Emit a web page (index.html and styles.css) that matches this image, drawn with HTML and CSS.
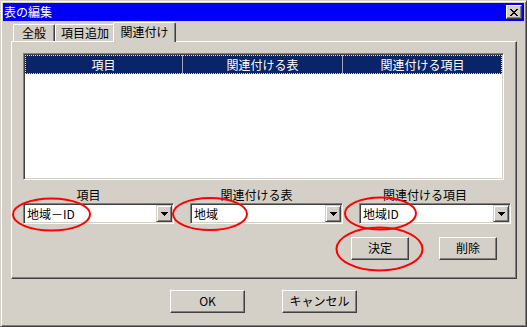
FILE: index.html
```html
<!DOCTYPE html>
<html lang="ja">
<head>
<meta charset="utf-8">
<title>表の編集</title>
<link rel="stylesheet" href="styles.css">
</head>
<body>
<div class="window">
  <div class="titlebar">
    <span class="title">表の編集</span>
    <span class="close"><svg width="8" height="7" viewBox="0 0 8 7"><path d="M0 0h2v1h-2zM6 0h2v1h-2zM1 1h2v1h-2zM5 1h2v1h-2zM2 2h4v1h-4zM3 3h2v1h-2zM2 4h4v1h-4zM1 5h2v1h-2zM5 5h2v1h-2zM0 6h2v1h-2zM6 6h2v1h-2z" fill="#000"/></svg></span>
  </div>
  <div class="tabs">
    <div class="tab t1">全般</div>
    <div class="tab t2">項目追加</div>
    <div class="tab active">関連付け</div>
  </div>
  <div class="panel">
    <div class="list">
      <div class="list-head">
        <div class="col">項目</div>
        <div class="col">関連付ける表</div>
        <div class="col last">関連付ける項目</div>
      </div>
    </div>
    <div class="fields">
      <div class="field">
        <div class="label">項目</div>
        <div class="combo"><span class="value">地域－ID</span><span class="drop"><svg width="7" height="4" viewBox="0 0 7 4"><path d="M0 0h7v1h-7zM1 1h5v1h-5zM2 2h3v1h-3zM3 3h1v1h-1z" fill="#000"/></svg></span></div>
      </div>
      <div class="field">
        <div class="label">関連付ける表</div>
        <div class="combo"><span class="value">地域</span><span class="drop"><svg width="7" height="4" viewBox="0 0 7 4"><path d="M0 0h7v1h-7zM1 1h5v1h-5zM2 2h3v1h-3zM3 3h1v1h-1z" fill="#000"/></svg></span></div>
      </div>
      <div class="field">
        <div class="label">関連付ける項目</div>
        <div class="combo"><span class="value">地域ID</span><span class="drop"><svg width="7" height="4" viewBox="0 0 7 4"><path d="M0 0h7v1h-7zM1 1h5v1h-5zM2 2h3v1h-3zM3 3h1v1h-1z" fill="#000"/></svg></span></div>
      </div>
    </div>
    <div class="actions">
      <div class="btn small">決定</div>
      <div class="btn small">削除</div>
    </div>
  </div>
  <div class="footer">
    <div class="btn wide">OK</div>
    <div class="btn wide">キャンセル</div>
  </div>
  <svg class="marks" width="527" height="327" viewBox="0 0 527 327">
    <g fill="none" stroke="#f00" stroke-width="2">
      <ellipse cx="51.5" cy="214.5" rx="38.5" ry="16"/>
      <ellipse cx="210" cy="214" rx="37" ry="16"/>
      <ellipse cx="380.5" cy="213.5" rx="35.5" ry="16"/>
      <ellipse cx="379.5" cy="249" rx="43" ry="21.5"/>
    </g>
  </svg>
</div>
</body>
</html>
```
FILE: styles.css
```css
* { box-sizing: border-box; }
body {
  margin: 0;
  background: #d4d0c8;
  font-family: "Noto Sans CJK JP", "Liberation Sans", sans-serif;
  font-size: 12px;
  color: #000;
}
.window {
  position: relative;
  width: 527px;
  height: 327px;
  border: 1px solid;
  border-color: #d4d0c8 #404040 #404040 #d4d0c8;
  box-shadow: inset 1px 1px #fff, inset -1px -1px #808080;
  padding: 2px;
  background: #d4d0c8;
}
.titlebar {
  height: 18px;
  background: #0000f8;
  color: #fff;
  display: flex;
  align-items: center;
  justify-content: space-between;
  padding: 0 2px 0 1px;
  line-height: 18px;
}
.title { font-size: 12px; }
.close {
  width: 16px;
  height: 14px;
  background: #d4d0c8;
  border: 1px solid;
  border-color: #fff #404040 #404040 #fff;
  box-shadow: inset -1px -1px #808080;
  display: flex;
  align-items: center;
  justify-content: center;
}
.close svg { display: block; }
.tabs {
  display: flex;
  align-items: flex-end;
  height: 20px;
  margin-left: 8px;
  padding-left: 2px;
  position: relative;
  z-index: 2;
}
.tab {
  height: 17px;
  border-top: 1px solid #fff;
  border-left: 1px solid #fff;
  border-right: 1px solid #404040;
  box-shadow: inset -1px 0 #808080;
  border-radius: 2px 2px 0 0;
  text-align: center;
  line-height: 15px;
  background: #d4d0c8;
}
.t1 { width: 42px; }
.t2 { width: 60px; }
.tab.active {
  width: 63px;
  height: 20px;
  margin-left: -2px;
  margin-bottom: -1px;
  line-height: 17px;
}
.panel {
  width: 506px;
  height: 238px;
  margin-left: 8px;
  border-top: 1px solid #fff;
  border-left: 1px solid #fff;
  border-right: 1px solid #404040;
  border-bottom: 1px solid #404040;
  box-shadow: inset -1px -1px #808080;
  padding: 11px 19px 0 11px;
}
.list {
  width: 481px;
  height: 127px;
  background: #fff;
  border: 1px solid;
  border-color: #808080 #fff #fff #808080;
  box-shadow: inset 1px 1px #404040, inset -1px -1px #d4d0c8;
  padding: 1px;
}
.list-head {
  display: grid;
  grid-template-columns: 158px 160px 1fr;
  height: 19px;
  background: #0a246a;
  color: #fff;
  outline: 1px dotted #f0d890;
  outline-offset: -1px;
}
.col {
  text-align: center;
  line-height: 19px;
  border-right: 1px solid #a6a6b4;
}
.col.last { border-right: none; }
.fields {
  display: grid;
  grid-template-columns: 151px 153px 152px;
  column-gap: 16px;
  margin-top: 8px;
}
.label {
  text-align: center;
  line-height: 14px;
  padding-right: 20px;
  margin-bottom: 1px;
}
.combo {
  display: flex;
  height: 21px;
  background: #fff;
  border: 1px solid;
  border-color: #808080 #fff #fff #808080;
  box-shadow: inset 1px 1px #404040, inset -1px -1px #d4d0c8;
  padding: 1px;
}
.value {
  flex: 1;
  padding-left: 2px;
  line-height: 17px;
}
.drop {
  width: 16px;
  height: 17px;
  background: #d4d0c8;
  border: 1px solid;
  border-color: #d4d0c8 #404040 #404040 #d4d0c8;
  box-shadow: inset 1px 1px #fff, inset -1px -1px #808080;
  display: flex;
  align-items: center;
  justify-content: center;
}
.drop svg { display: block; }
.actions {
  display: flex;
  justify-content: flex-end;
  gap: 30px;
  margin-top: 13px;
}
.btn {
  height: 23px;
  background: #d4d0c8;
  border: 1px solid;
  border-color: #fff #404040 #404040 #fff;
  box-shadow: inset -1px -1px #808080;
  text-align: center;
  line-height: 20px;
}
.btn.small { width: 58px; }
.btn.wide { width: 75px; }
.footer {
  display: flex;
  justify-content: center;
  gap: 37px;
  margin-top: 11px;
}
.marks {
  position: absolute;
  left: -1px;
  top: -1px;
  pointer-events: none;
}
```
